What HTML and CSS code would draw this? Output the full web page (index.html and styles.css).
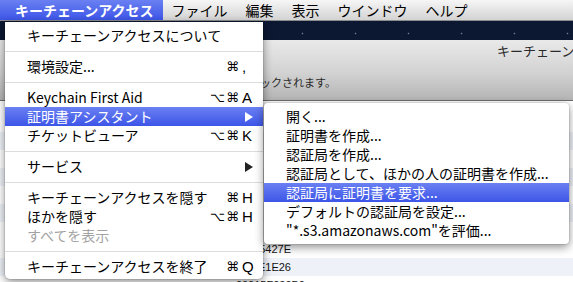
FILE: index.html
```html
<!DOCTYPE html>
<html lang="ja">
<head>
<meta charset="utf-8">
<title>キーチェーンアクセス</title>
<link rel="stylesheet" href="styles.css">
</head>
<body>
<div class="screen">
  <div class="menubar">
    <div class="mb-item app active">キーチェーンアクセス</div>
    <div class="mb-item">ファイル</div>
    <div class="mb-item">編集</div>
    <div class="mb-item">表示</div>
    <div class="mb-item">ウインドウ</div>
    <div class="mb-item">ヘルプ</div>
  </div>
  <div class="desk"></div>
  <div class="window">
    <div class="titlebar">
      <div class="title">キーチェーンアクセス</div>
      <div class="lockmsg">ロックされます。</div>
    </div>
    <div class="list">
      <div class="list-head"></div>
      <div class="row"><span class="cell"></span></div>
      <div class="row alt"><span class="cell"></span></div>
      <div class="row"><span class="cell"></span></div>
      <div class="row alt"><span class="cell"></span></div>
      <div class="row"><span class="cell"></span></div>
      <div class="row alt"><span class="cell"></span></div>
      <div class="row"><span class="cell"></span></div>
      <div class="row"><span class="cell">A0D5427E</span></div>
      <div class="row alt"><span class="cell">3B7E1E26</span></div>
      <div class="row"><span class="cell wide">00015F230B0</span></div>
    </div>
  </div>

  <div class="menu main-menu">
    <div class="item"><span class="label">キーチェーンアクセスについて</span></div>
    <div class="sep"></div>
    <div class="item"><span class="label">環境設定...</span><span class="mods">⌘</span><span class="key">,</span></div>
    <div class="sep"></div>
    <div class="item"><span class="label">Keychain First Aid</span><span class="mods">⌥⌘</span><span class="key">A</span></div>
    <div class="item hl"><span class="label">証明書アシスタント</span><svg class="arrow" width="8" height="10" viewBox="0 0 8 10"><path d="M0 0 L8 5 L0 10 Z"/></svg></div>
    <div class="item"><span class="label">チケットビューア</span><span class="mods">⌥⌘</span><span class="key">K</span></div>
    <div class="sep"></div>
    <div class="item"><span class="label">サービス</span><svg class="arrow dark" width="8" height="10" viewBox="0 0 8 10"><path d="M0 0 L8 5 L0 10 Z"/></svg></div>
    <div class="sep"></div>
    <div class="item"><span class="label">キーチェーンアクセスを隠す</span><span class="mods">⌘</span><span class="key">H</span></div>
    <div class="item"><span class="label">ほかを隠す</span><span class="mods">⌥⌘</span><span class="key">H</span></div>
    <div class="item disabled"><span class="label">すべてを表示</span></div>
    <div class="sep"></div>
    <div class="item"><span class="label">キーチェーンアクセスを終了</span><span class="mods">⌘</span><span class="key">Q</span></div>
  </div>

  <div class="menu sub-menu">
    <div class="item"><span class="label">開く...</span></div>
    <div class="item"><span class="label">証明書を作成...</span></div>
    <div class="item"><span class="label">認証局を作成...</span></div>
    <div class="item"><span class="label">認証局として、ほかの人の証明書を作成...</span></div>
    <div class="item hl"><span class="label">認証局に証明書を要求...</span></div>
    <div class="item"><span class="label">デフォルトの認証局を設定...</span></div>
    <div class="item"><span class="label">"*.s3.amazonaws.com"を評価...</span></div>
  </div>
</div>
</body>
</html>
```

FILE: styles.css
```css
* { box-sizing: border-box; }
html, body { margin: 0; padding: 0; }
body {
  width: 573px;
  height: 282px;
  overflow: hidden;
  font-family: "Noto Sans CJK JP", "Liberation Sans", sans-serif;
  background: #fff;
}
.screen {
  position: relative;
  width: 573px;
  height: 282px;
  overflow: hidden;
}

/* menu bar */
.menubar {
  height: 21px;
  display: flex;
  background: linear-gradient(#f6f6f6, #d3d3d3);
  border-bottom: 1px solid #8c8c8c;
  font-size: 14px;
  line-height: 20px;
  color: #000;
}
.mb-item {
  padding: 0 9px;
  white-space: nowrap;
}
.mb-item.app {
  padding-left: 15px;
  font-weight: bold;
}
.mb-item.active {
  color: #fff;
  background: linear-gradient(#6a80f2, #3d55e8);
}

/* desktop strip */
.desk {
  height: 19px;
  background-color: #0c1832;
  background-image:
    radial-gradient(circle, rgba(255,255,255,.45) 0 0.6px, transparent 1.1px);
  background-size: 53px 17px;
  background-position: 11px 4px;
}

/* window behind */
.window {
  display: flex;
  flex-direction: column;
}
.titlebar {
  flex: none;
  height: 61px;
  background: linear-gradient(#e9e9e9, #d2d2d2 55%, #b4b4b4);
  border-bottom: 1px solid #6c6c6c;
  padding-top: 3px;
  color: #2a2a2a;
}
.title {
  font-size: 13px;
  line-height: 16px;
  padding-left: 497px;
  white-space: nowrap;
}
.lockmsg {
  font-size: 11px;
  line-height: 14px;
  margin-top: 16px;
  padding-left: 249px;
  white-space: nowrap;
}
.list {
  background: #fff;
}
.list-head { height: 13px; }
.row {
  height: 18px;
  display: flex;
  font-family: "Liberation Sans", sans-serif;
  font-size: 11px;
  line-height: 18px;
  color: #111;
}
.row.alt { background: #eef2f8; }
.cell {
  width: 291px;
  text-align: right;
  white-space: nowrap;
  overflow: hidden;
}
.cell.wide { width: 305px; }

/* menus */
.menu {
  position: absolute;
  background: #fff;
  box-shadow: 0 3px 10px rgba(0,0,0,.45), 0 0 0 1px rgba(0,0,0,.08);
  font-size: 14px;
  color: #000;
}
.main-menu {
  left: 5px;
  top: 22px;
  width: 258px;
  padding: 4px 0 3px;
  border-radius: 0 0 5px 5px;
}
.sub-menu {
  left: 264px;
  top: 103px;
  width: 305px;
  padding: 4px 0 4px;
  border-radius: 4px;
}
.item {
  height: 19px;
  line-height: 19px;
  display: flex;
  align-items: center;
  padding: 0 9px 0 22px;
  white-space: nowrap;
}
.item .label { flex: 1; }
.item.hl {
  color: #fff;
  background: linear-gradient(#6a80f2, #3d55e8);
}
.item.disabled { color: #a3a3a3; }
.mods {
  font-family: "DejaVu Sans", sans-serif;
  font-size: 13px;
  text-align: right;
  letter-spacing: 1px;
}
.key {
  width: 14px;
  padding-left: 2px;
  font-family: "Liberation Sans", sans-serif;
  font-size: 15px;
}
.arrow {
  fill: #fff;
  margin-right: 1px;
}
.arrow.dark { fill: #222; }
.sep {
  height: 1px;
  margin: 6px 0 5px;
  background: #dcdcdc;
}
```
